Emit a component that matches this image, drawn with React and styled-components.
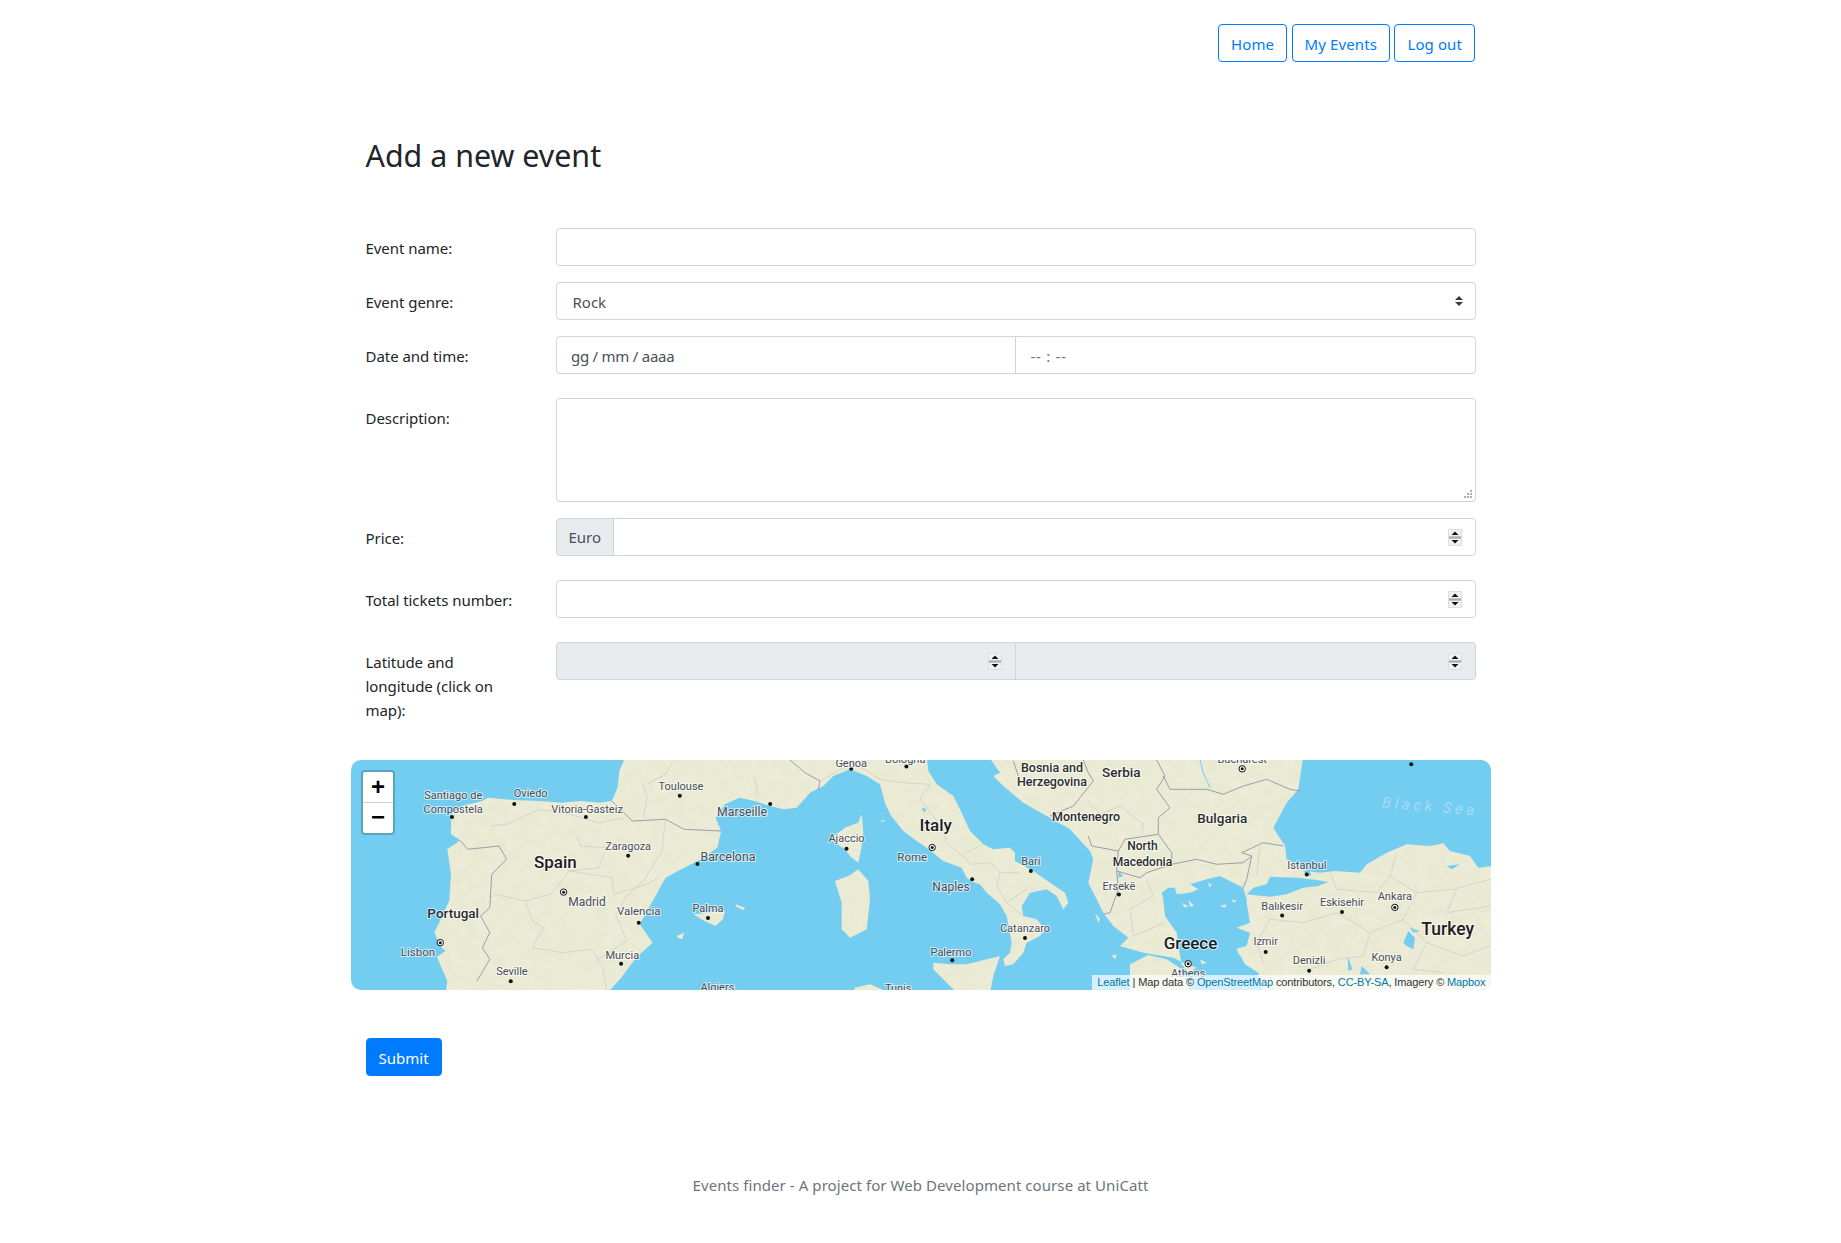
import React from "react";
import styled, { createGlobalStyle } from "styled-components";

const Global = createGlobalStyle`
  html, body { margin: 0; padding: 0; background: #fff; }
  body { font-family: "Noto Sans", "Open Sans", Arial, sans-serif; font-size: 15px; line-height: 24px; color: #212529; }
  * { box-sizing: border-box; }
`;

const Page = styled.div`
  width: 1140px;
  margin: 0 auto;
  padding: 24px 15px 0;
  height: 1243px;
`;
const Nav = styled.nav`
  display: flex;
  justify-content: flex-end;
  gap: 4.5px;
  padding-right: 0.5px;
`;
const NavButton = styled.a`
  display: block;
  height: 38px;
  padding: 7px 12px 5px;
  border: 1px solid #007bff;
  border-radius: 4px;
  color: #007bff;
  white-space: nowrap;
  letter-spacing: 0.1px;
`;
const Title = styled.h2`
  margin: 75px 0 53px;
  font-size: 30.4px;
  line-height: 38px;
  font-weight: 400;
`;
const Row = styled.div`
  display: grid;
  grid-template-columns: 175px 1fr;
  gap: 15px;
  margin-bottom: ${p => p.$mb ?? 16}px;
`;
const Label = styled.label`
  padding-top: 8px;
  letter-spacing: -0.05px;
  width: 150px;
`;
const fieldStyles = `
  display: block;
  width: 100%;
  height: 38px;
  padding: 7px 12px 5px;
  border: 1px solid #ced4da;
  border-radius: 4px;
  font: inherit;
  color: #495057;
  background: #fff;
  outline: none;
`;
const spin = "data:image/svg+xml,%3csvg xmlns='http://www.w3.org/2000/svg' width='14' height='17'%3e%3crect width='14' height='17' fill='%23dedede'/%3e%3crect x='1' y='1' width='12' height='6' fill='%23f2f2f2'/%3e%3crect x='1' y='10' width='12' height='6' fill='%23f2f2f2'/%3e%3crect x='1' y='7.5' width='12' height='2' fill='%23aaaaaa'/%3e%3cpath d='M3.5 6L7 2.5 10.5 6z' fill='%23111'/%3e%3cpath d='M3.5 11L7 14.5 10.5 11z' fill='%23111'/%3e%3c/svg%3e";
const grip = "data:image/svg+xml,%3csvg xmlns='http://www.w3.org/2000/svg' width='15' height='15' fill='%23b0b0b0'%3e%3crect x='10' y='4' width='2' height='2'/%3e%3crect x='7' y='7' width='2' height='2'/%3e%3crect x='10' y='7' width='2' height='2'/%3e%3crect x='4' y='10' width='2' height='2'/%3e%3crect x='7' y='10' width='2' height='2'/%3e%3crect x='10' y='10' width='2' height='2'/%3e%3c/svg%3e";
const Input = styled.input`
  ${fieldStyles}
  &::placeholder { color: ${p => p.$muted ? "#6c757d" : "#495057"}; opacity: 1; letter-spacing: ${p => p.$muted ? "0.7px" : "-0.25px"}; }
  &::-webkit-inner-spin-button {
    -webkit-appearance: none;
    appearance: none;
    opacity: 1;
    display: block;
    flex: none;
    align-self: center;
    width: 14px;
    height: 17px;
    margin: 0 1px 0 0;
    position: relative;
    top: -1px;
    background: url("${spin}") no-repeat center / 14px 17px;
  }
  &:disabled { background: #e9ecef; }
`;
const DateInput = styled(Input)`
  padding-left: 14.5px;
`;
const Select = styled.select`
  ${fieldStyles}
  padding-left: 16px;
  appearance: none;
  background: #fff url("data:image/svg+xml,%3csvg xmlns='http://www.w3.org/2000/svg' width='4' height='5' viewBox='0 0 4 5'%3e%3cpath fill='%23343a40' d='M2 0L0 2h4zm0 5L0 3h4z'/%3e%3c/svg%3e") no-repeat right 12px center / 8px 10px;
`;
const TextArea = styled.textarea`
  ${fieldStyles}
  height: 104px;
  &::-webkit-resizer { background: url("${grip}") no-repeat; }
`;
const Group = styled.div`
  display: flex;
  width: 100%;
  & > input { flex: 1 1 0; min-width: 0; }
  & > :not(:first-child) { border-top-left-radius: 0; border-bottom-left-radius: 0; margin-left: -1px; }
  & > :not(:last-child) { border-top-right-radius: 0; border-bottom-right-radius: 0; }
`;
const Addon = styled.span`
  display: block;
  height: 38px;
  padding: 6px 12px;
  border: 1px solid #ced4da;
  border-radius: 4px;
  background: #e9ecef;
  color: #495057;
`;
const MapBox = styled.div`
  position: relative;
  height: 230px;
  margin: 38px -15px 48px;
  border-radius: 10px;
  overflow: hidden;
  background: #72cdf1;
`;
const MapSvg = styled.svg`
  display: block;
  width: 100%;
  height: 100%;
  font-family: Roboto, "Liberation Sans", sans-serif;
`;
const Zoom = styled.div`
  position: absolute;
  top: 10px;
  left: 10px;
  width: 34px;
  border: 2px solid rgba(0, 0, 0, 0.2);
  border-radius: 4px;
  background-clip: padding-box;
`;
const ZoomBtn = styled.div`
  display: block;
  height: ${p => p.$last ? 30 : 31}px;
  text-align: center;
  background: #fff;
  color: #000;
  font: bold 24px/${p => p.$last ? 27 : 29}px "Liberation Sans", Arial, sans-serif;
  text-indent: 1px;
  border-bottom: ${p => p.$last ? "none" : "1px solid #ccc"};
  border-radius: ${p => p.$last ? "0 0 2px 2px" : "2px 2px 0 0"};
`;
const Attribution = styled.div`
  position: absolute;
  right: 0;
  bottom: 0;
  padding: 0 5px;
  background: rgba(255, 255, 255, 0.7);
  font: 11px/15px "Liberation Sans", Arial, sans-serif;
  letter-spacing: -0.12px;
  color: #333;
  white-space: nowrap;
`;
const AttrLink = styled.a`
  color: #0078a8;
`;
const Submit = styled.button`
  display: block;
  height: 38px;
  padding: 1px 12px 0;
  border: 1px solid #007bff;
  border-radius: 4px;
  background: #007bff;
  color: #fff;
  font: inherit;
`;
const Footer = styled.footer`
  margin-top: 97px;
  text-align: center;
  color: #6c757d;
  letter-spacing: 0.07px;
`;

/* Each helper turns coordinates read off a reference crop into map pixels. */
const conv = (ox, oy, sxx, syy) => pts => pts.map(([x, y]) => [ox + sxx * x, oy + syy * y]);
const z1 = conv(-11, -9, 0.37, 1 / 3);
const z2 = conv(419, -4, 1 / 3, 1 / 3);
const z3 = conv(699, -4, 1 / 3, 1 / 3);
const z4 = conv(919, -4, 1 / 3, 1 / 3);
const str = pts => pts.map(([x, y]) => `${x.toFixed(1)},${y.toFixed(1)}`).join(" ");

const land = [
  [
    ...z1([[770,20],[755,60],[750,110],[735,150],[700,155],[650,150],[600,155],[540,150],[480,148],[400,140],[385,150],[330,165],[300,190],[300,250],[325,268],[290,295],[300,370],[295,450],[270,510],[255,545],[275,590],[285,600],[262,618],[290,690],[285,730],[720,730],[760,680],[800,620],[845,575],[810,520],[825,490],[870,400],[880,380],[930,350],[975,325],[1020,290],[1030,240],[1015,200],[1040,160],[1080,140],[1120,150],[1190,175]]),
    ...z2([[0,150],[40,160],[80,155],[120,110],[160,90],[190,60],[240,40],[290,60],[330,85],[345,140],[360,175],[400,225],[440,255],[470,275],[520,315],[575,335],[590,365],[607,378],[630,385],[650,410],[690,445],[710,480],[725,560],[720,590],[700,610],[705,630],[730,625],[760,590],[770,560],[810,540],[825,520],[800,490],[760,480],[755,450],[780,410],[830,400],[860,420],[880,460],[895,440],[885,410],[840,380],[790,345],[735,315],[735,290],[720,275],[670,280],[640,265],[600,225],[570,160],[550,120],[500,85],[475,45],[470,0]]),
  ],
  z2([[275,175],[280,230],[275,270],[265,320],[240,300],[225,280],[180,250],[225,215],[265,200]]),
  z2([[265,340],[295,375],[300,430],[290,520],[240,545],[215,520],[215,440],[195,375],[235,360]]),
  z1([[955,490],[1040,480],[1035,505],[1015,525],[985,510]]),
  z1([[1068,460],[1095,470],[1090,477],[1072,468]]),
  z1([[910,555],[930,545],[925,565],[915,562]]),
  z1([[970,716],[1075,716],[1075,730],[970,730]]),
  z2([[490,620],[540,625],[590,625],[690,600],[670,660],[660,710],[560,710],[490,640]]),
  z2([[250,710],[255,695],[300,685],[335,700],[335,710]]),
  z2([[330,195],[345,192],[340,198]]),
  [
    ...z2([[655,0],[690,50],[670,60],[700,90],[760,140],[830,180],[900,220],[960,285],[970,310],[955,380],[980,430],[1000,470]]),
    ...z3([[190,510],[235,545],[210,570],[280,590],[370,605],[400,620],[440,635],[415,650],[395,625],[385,570],[380,530],[345,480],[340,430],[335,410],[355,395],[375,395],[380,415],[420,410],[445,400],[420,385],[470,370],[510,360],[580,395],[590,430],[590,440],[600,500],[560,515],[600,530],[590,570],[560,578],[585,625],[625,650],[640,710]]),
    ...z4([[670,710],[670,330],[625,335],[600,300],[540,285],[520,262],[480,270],[410,265],[350,290],[290,325],[270,350],[195,345],[150,350],[110,345],[50,310],[45,270],[10,215],[50,140],[85,100],[100,0]]),
  ],
  z3([[240,625],[295,597],[350,610],[395,640],[420,710],[240,710]]),
  z3([[350,530],[390,570],[375,575],[340,545]]),
  z3([[395,440],[415,450],[405,455]]),
  z3([[415,432],[432,450],[420,452]]),
  z3([[475,380],[485,385],[478,395]]),
  z3([[135,470],[150,490],[145,500]]),
  z3([[185,600],[200,595],[195,610]]),
  z3([[450,610],[470,620],[455,625]]),
  z3([[510,450],[530,445],[525,455]]),
  z3([[575,575],[570,600],[560,580]]),
  z3([[545,430],[560,435],[550,440]]),
];

const water = [
  [...z3([[590,415],[610,395],[650,385]]), ...z4([[0,362],[80,365],[140,372],[175,378],[145,390],[100,395],[50,415],[0,422]])],
  z4([[100,345],[118,345],[125,358],[108,360]]),
  z4([[400,560],[415,525],[435,545],[430,580],[410,570]]),
  z4([[233,600],[247,640],[235,645]]),
  z4([[275,630],[300,655],[270,655]]),
  z4([[530,330],[570,325],[545,340]]),
  z4([[420,515],[450,525],[430,530]]),
  z2([[455,155],[470,160],[462,170]]),
  z3([[205,345],[220,360],[205,365]]),
];

const strongBorders = [
  z1([[325,268],[345,295],[430,285],[450,325],[410,370],[405,470],[380,495],[405,545],[385,590],[405,625],[370,690]]),
  z1([[735,150],[790,210],[880,205],[930,235],[1030,240]]),
  z2([[60,12],[105,50],[150,75],[145,100]]),
  z3([[340,60],[360,100],[470,100],[520,115],[580,90],[650,70],[720,100],[750,105]]),
  z3([[320,12],[345,60],[320,100],[360,155],[325,185],[325,235]]),
  z3([[325,235],[365,290],[365,325],[290,350],[270,365],[200,345],[205,285],[225,250],[325,235]]),
  z3([[365,325],[440,310],[500,325],[580,320],[605,300],[575,290],[640,260],[700,270]]),
  z3([[605,300],[590,370],[580,395]]),
  z3([[115,240],[125,270],[205,285]]),
  z3([[200,345],[205,400],[180,470],[160,475]]),
  z3([[100,12],[115,50],[130,75],[70,150],[0,180]]),
  z2([[730,15],[745,60]]),
];
const softBorders = [
  z1([[408,225],[450,220],[540,175],[620,190],[700,215],[770,200]]),
  z1([[640,255],[650,285],[720,290],[700,350],[620,360],[600,390],[570,430],[500,450],[420,430],[405,440]]),
  z1([[620,360],[735,380],[740,430],[830,400],[860,380]]),
  z1([[500,450],[520,510],[550,530],[520,590],[600,605],[680,595],[710,650],[720,716]]),
  z1([[880,205],[870,300],[820,390],[770,440],[760,470],[745,490],[775,570],[690,630]]),
  z1([[820,100],[830,140],[820,200]]),
  z1([[1120,80],[1130,130]]),
  z1([[900,30],[880,70],[830,100]]),
  z2([[150,75],[250,20],[330,70],[400,80],[480,85]]),
  z2([[480,85],[450,130],[520,220],[530,260],[590,310],[600,325],[660,320],[690,350],[750,350]]),
  z2([[590,290],[640,265]]),
  z2([[690,350],[680,390],[710,440],[770,400]]),
  z2([[710,440],[760,480]]),
  z3([[110,130],[150,175],[210,150],[280,205],[275,235]]),
  z3([[240,460],[310,420],[290,370]]),
  z3([[240,460],[250,540],[300,520],[340,500]]),
  z3([[630,270],[620,360]]),
  z4([[180,350],[200,400],[320,410],[360,360],[380,290]]),
  z4([[360,360],[440,410],[550,400],[660,370]]),
  z4([[440,410],[400,490],[300,530],[200,470],[100,500],[0,490]]),
  z4([[300,530],[280,600],[200,610],[120,640]]),
  z4([[400,490],[470,560],[580,600],[660,570]]),
  z4([[470,560],[430,640],[520,650]]),
  z4([[560,400],[530,470],[660,450]]),
  z4([[0,490],[-40,560],[-20,620]]),
];

const sx = x => x * 1.1741 - 351;
const sy = y => y * 1.1741 - 759;

const cities = [
  ["Genoa",725,649],["Bologna",771,646],["Toulouse",580,669],["Oviedo",452,675],["Vitoria-Gasteiz",500,689],["Marseille",632,691,12.3],
  ["Ajaccio",721,713],["Zaragoza",535,720],["Barcelona",620,729,12.3],["Madrid",500,767,12],["Valencia",544,775,11.5],["Palma",603,773],
  ["Lisbon",356,810,11.5],["Murcia",530,813],["Seville",436,827],["Algiers",611,840],["Tunis",765,841],["Rome",777,729,11.5],["Bari",878,733],
  ["Naples",810,755,12],["Istanbul",1113,736],["Ersekë",953,754],["Balıkesir",1092,771],["Eskisehir",1143,768],["Ankara",1188,763],
  ["Catanzaro",873,790],["Palermo",810,810],["Athens",1012,828],["Izmir",1078,801],["Denizli",1115,817],["Konya",1181,815],
  ["Santiago de",386,677],["Compostela",386,689],["Bucharest",1058,646],
];
const regions = [
  ["Bosnia and",896,653,12.5],["Herzegovina",896,665,12.5],["Serbia",955,657,13.5],["Montenegro",925,695,12.5],["Bulgaria",1041,696,13.5],["North",973,720,12],["Macedonia",973,733,12],["Portugal",386,777,13.5],
];
const countries = [["Spain",473,733,17],["Italy",797,702,17],["Greece",1014,802,17],["Turkey",1233,790,17.5]];
const dots = [[725,654],[772,652],[579,677],[438,684],[499,695],[656,684],[721,722],[535,728],[594,735],[544,785],[603,781],[529,820],[435,835],[878,741],[828,748],[385,695],[1113,744],[953,761],[1092,779],[1143,776],[873,798],[811,817],[1078,810],[1115,826],[1181,823],[1202,650]];
const capitals = [[480,759],[375,802],[794,721],[1058,654],[1188,772],[1012,820]];

const labelStroke = "rgba(255,255,255,.65)";

const MapArt = () => (
  <MapSvg viewBox="0 0 1140 230" preserveAspectRatio="none">
    <defs>
      <filter id="terrain" x="0" y="0" width="100%" height="100%">
        <feTurbulence type="fractalNoise" baseFrequency="0.09" numOctaves="4" seed="7" />
        <feColorMatrix values="0 0 0 0 0.74  0 0 0 0 0.78  0 0 0 0 0.54  2.6 0 0 0 -1.1" />
        <feComposite in2="SourceAlpha" operator="in" />
      </filter>
    </defs>
    <g fill="#ebebd6">{land.map((p, i) => <polygon key={i} points={str(p)} />)}</g>
    <g filter="url(#terrain)" opacity="0.3">{land.map((p, i) => <polygon key={i} points={str(p)} fill="#000" />)}</g>
    <g fill="#72cdf1">{water.map((p, i) => <polygon key={i} points={str(p)} />)}</g>
    <polyline points={str(z3([[450,12],[460,50],[480,95]]))} fill="none" stroke="#72cdf1" strokeWidth="1" />
    <g fill="none" stroke="#cdcfc8" strokeWidth="0.8">{softBorders.map((p, i) => <polyline key={i} points={str(p)} />)}</g>
    <g fill="none" stroke="#9a9dab" strokeWidth="1">{strongBorders.map((p, i) => <polyline key={i} points={str(p)} />)}</g>
    <g fill="#111">{dots.map(([x, y], i) => <circle key={i} cx={sx(x)} cy={sy(y)} r="2" />)}</g>
    <g>{capitals.map(([x, y], i) => (
      <g key={i}>
        <circle cx={sx(x)} cy={sy(y)} r="3.2" fill="#fff" stroke="#111" strokeWidth="1" />
        <circle cx={sx(x)} cy={sy(y)} r="1.5" fill="#111" />
      </g>
    ))}</g>
    <g textAnchor="middle" dominantBaseline="central" fill="#484c54" stroke={labelStroke} strokeWidth="2" paintOrder="stroke">
      {cities.map(([t, x, y, s]) => <text key={t} x={sx(x)} y={sy(y)} fontSize={s || 11}>{t}</text>)}
    </g>
    <g textAnchor="middle" dominantBaseline="central" fill="#2b2d31" fontWeight="500" stroke={labelStroke} strokeWidth="2" paintOrder="stroke">
      {regions.map(([t, x, y, s]) => <text key={t} x={sx(x)} y={sy(y)} fontSize={s}>{t}</text>)}
    </g>
    <g textAnchor="middle" dominantBaseline="central" fill="#1b1c1f" fontWeight="500" stroke={labelStroke} strokeWidth="2" paintOrder="stroke">
      {countries.map(([t, x, y, s]) => <text key={t} x={sx(x)} y={sy(y)} fontSize={s}>{t}</text>)}
    </g>
    <text x={sx(1218)} y={sy(686)} textAnchor="middle" dominantBaseline="central" fontSize="15" letterSpacing="3.6" fill="#a6dcf3" fontStyle="italic" transform={`rotate(5 ${sx(1218)} ${sy(686)})`}>Black Sea</text>
  </MapSvg>
);

export default function App() {
  return (
    <Page>
      <Global />
      <Nav>
        <NavButton>Home</NavButton>
        <NavButton>My Events</NavButton>
        <NavButton>Log out</NavButton>
      </Nav>
      <Title>Add a new event</Title>
      <Row>
        <Label>Event name:</Label>
        <Input type="text" />
      </Row>
      <Row>
        <Label>Event genre:</Label>
        <Select defaultValue="Rock"><option>Rock</option></Select>
      </Row>
      <Row $mb={24}>
        <Label>Date and time:</Label>
        <Group>
          <DateInput type="text" placeholder="gg / mm / aaaa" />
          <DateInput type="text" placeholder="-- : --" $muted />
        </Group>
      </Row>
      <Row>
        <Label>Description:</Label>
        <TextArea />
      </Row>
      <Row $mb={24}>
        <Label>Price:</Label>
        <Group>
          <Addon>Euro</Addon>
          <Input type="number" />
        </Group>
      </Row>
      <Row $mb={24}>
        <Label>Total tickets number:</Label>
        <Input type="number" />
      </Row>
      <Row $mb={0}>
        <Label>Latitude and longitude (click on map):</Label>
        <Group>
          <Input type="number" disabled />
          <Input type="number" disabled />
        </Group>
      </Row>
      <MapBox>
        <MapArt />
        <Zoom>
          <ZoomBtn>+</ZoomBtn>
          <ZoomBtn $last>−</ZoomBtn>
        </Zoom>
        <Attribution>
          <AttrLink>Leaflet</AttrLink> | Map data © <AttrLink>OpenStreetMap</AttrLink> contributors, <AttrLink>CC-BY-SA</AttrLink>, Imagery © <AttrLink>Mapbox</AttrLink>
        </Attribution>
      </MapBox>
      <Submit>Submit</Submit>
      <Footer>Events finder - A project for Web Development course at UniCatt</Footer>
    </Page>
  );
}
